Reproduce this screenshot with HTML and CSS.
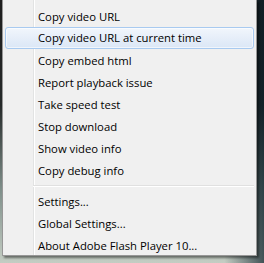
FILE: index.html
```html
<!DOCTYPE html>
<html lang="en">
  <head>
    <meta charset="UTF-8" />
    <title>Context menu</title>
    <link rel="stylesheet" href="styles.css">
  </head>
  <body>
    <main class="desktop">
      <ul class="menu">
        <li class="item">Copy video URL</li>
        <li class="item active">Copy video URL at current time</li>
        <li class="item">Copy embed html</li>
        <li class="item">Report playback issue</li>
        <li class="item">Take speed test</li>
        <li class="item">Stop download</li>
        <li class="item">Show video info</li>
        <li class="item">Copy debug info</li>
        <li class="separator"></li>
        <li class="item">Settings...</li>
        <li class="item">Global Settings...</li>
        <li class="item">About Adobe Flash Player 10...</li>
      </ul>
    </main>
  </body>
</html>
```

FILE: styles.css
```css
* {
  margin: 0;
  padding: 0;
  box-sizing: border-box;
}

body {
  width: 264px;
  height: 263px;
  overflow: hidden;
  font-family: "Open Sans", "Noto Sans", sans-serif;
  background-color: #1c1c1c;
  background-image:
    linear-gradient(90deg, rgba(20, 20, 20, 0) 0%, rgba(20, 20, 20, 0) 85%, rgba(10, 30, 40, 0.7) 100%),
    linear-gradient(180deg, #1e1e1e 0%, #262a2a 40%, #7f8f8a 72%, #c4cdc3 100%);
}

main.desktop {
  width: 100%;
  height: 100%;
  padding-left: 2px;
}

ul.menu {
  list-style: none;
  width: 255px;
  height: 256px;
  padding: 5px 2px 0 2px;
  background-color: #f0f0f0;
  background-image: linear-gradient(90deg, transparent 30px, #e2e3e3 30px, #e2e3e3 31px, #ffffff 31px, #ffffff 32px, transparent 32px);
  border: 1px solid #979797;
  border-top: none;
  box-shadow: 2px 2px 2px rgba(0, 0, 0, 0.45);
}

li.item {
  height: 22px;
  padding-left: 32px;
  font-size: 11.3px;
  line-height: 21px;
  color: #000;
  white-space: nowrap;
  border: 1px solid transparent;
  border-radius: 3px;
}

li.active {
  line-height: 20px;
  border-color: #a8caf0;
  background-image: linear-gradient(180deg, #f1f6fc 0%, #e6eef9 50%, #dbe7f6 100%);
  box-shadow: inset 0 0 0 1px rgba(255, 255, 255, 0.6);
}

li.separator {
  height: 9px;
  margin-left: 28px;
  background-image: linear-gradient(180deg, transparent 4px, #e0e0e0 4px, #e0e0e0 5px, #ffffff 5px, #ffffff 6px, transparent 6px);
}
```
